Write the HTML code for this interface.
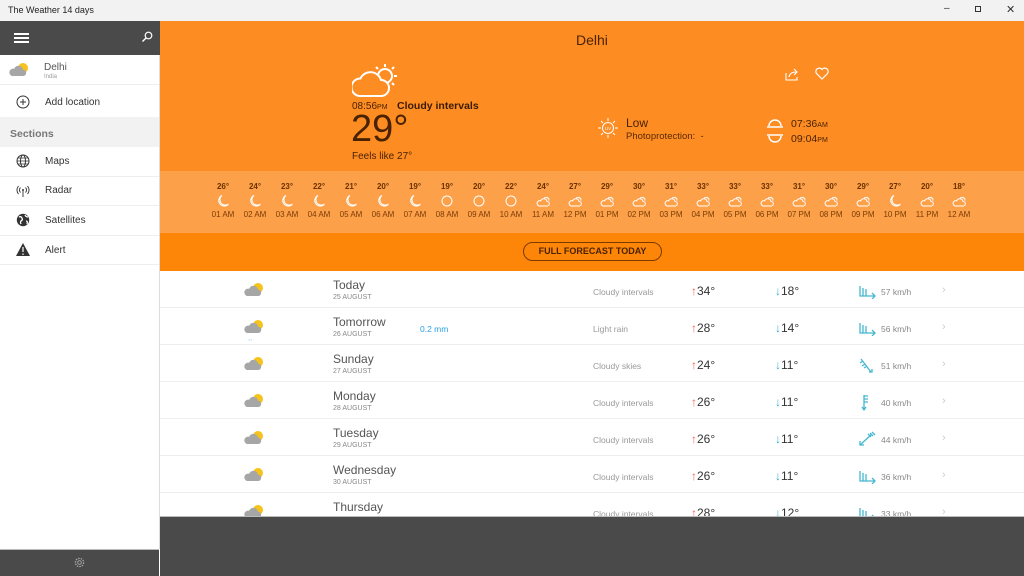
<!DOCTYPE html>
<html><head><meta charset="utf-8">
<style>
*{margin:0;padding:0;box-sizing:border-box}
body{width:1024px;height:576px;overflow:hidden;font-family:"Liberation Sans",sans-serif;background:#fff;position:relative}
.a{position:absolute;white-space:nowrap}
.hr{position:absolute;width:32px;text-align:center;color:#7a3b00}
.hr .t{position:absolute;top:182px;width:32px;font-size:8px;font-weight:bold;color:#6b3200}
.hr .l{position:absolute;top:210px;width:32px;font-size:8px;color:#7a3d05}
.hr svg{position:absolute;top:194px;left:9px}
.row{position:absolute;left:160px;width:864px;height:37px;border-bottom:1px solid #eee}
.row .ic{position:absolute;left:83px;top:11px}
.row .d{position:absolute;left:173px;top:7px;font-size:12px;color:#555}
.row .s{position:absolute;left:173px;top:23px;font-size:7px;color:#888}
.row .c{position:absolute;left:433px;top:16px;font-size:8.5px;color:#999}
.row .h{position:absolute;left:531px;top:13px;font-size:12px;color:#333}
.row .h b{color:#f0625a;font-weight:normal}
.row .lo{position:absolute;left:615px;top:13px;font-size:12px;color:#333}
.row .lo b{color:#3cb0d0;font-weight:normal}
.row .w{position:absolute;left:698px;top:12px}
.row .k{position:absolute;left:721px;top:16px;font-size:8.5px;color:#888}
.row .ch{position:absolute;left:782px;top:13px;font-size:11px;color:#ccc}
.side{font-size:10px;color:#333}
</style></head><body>
<svg width="0" height="0" style="position:absolute">
<symbol id="moon" viewBox="0 0 14 14"><path d="M6 1.5A5.5 5.5 0 1 0 12.5 10 5 5 0 0 1 6 1.5Z" fill="none" stroke="#fff" stroke-width="1"/></symbol>
<symbol id="sun" viewBox="0 0 14 14"><circle cx="7" cy="7" r="5" fill="none" stroke="#fff" stroke-width="1"/></symbol>
<symbol id="cl" viewBox="0 0 14 14"><path d="M8 4.5a2.8 2.8 0 0 1 5 2" fill="none" stroke="#fff"/><path d="M3 12h8a2.3 2.3 0 0 0 0-4.6 3.3 3.3 0 0 0-6.3-.6A2.6 2.6 0 0 0 3 12Z" fill="none" stroke="#fff" stroke-width="1"/></symbol>
<symbol id="pc" viewBox="0 0 22 16"><circle cx="15" cy="6" r="5" fill="#f6c21c"/><path d="M4 14h11a3.2 3.2 0 0 0 0-6.4 4.6 4.6 0 0 0-8.8-.8A3.6 3.6 0 0 0 4 14Z" fill="#a6a6a6"/></symbol>
<symbol id="wE" viewBox="0 0 20 16"><path d="M2 3v10h15M14 10l3 3-3 3M5 5v8M8 6v7" fill="none" stroke="#45b8d0" stroke-width="1.3"/></symbol>
</svg>

<div class="a" style="left:0;top:0;width:1024px;height:21px;background:#f2f2f2"></div>
<div class="a" style="left:8px;top:5px;font-size:9px;color:#222">The Weather 14 days</div>
<div class="a" style="left:944px;top:3px;font-size:10px;color:#333">–</div>
<div class="a" style="left:975px;top:6px;width:6px;height:6px;border:1px solid #333"></div>
<div class="a" style="left:1006px;top:3px;font-size:11px;color:#333">✕</div>

<div class="a" style="left:0;top:21px;width:160px;height:34px;background:#4a4a4a"></div>
<div class="a" style="left:14px;top:33px;width:15px;height:1.5px;background:#fff;box-shadow:0 4px 0 #fff,0 8px 0 #fff"></div>
<svg class="a" style="left:141px;top:31px" width="12" height="12" viewBox="0 0 12 12"><circle cx="7.5" cy="4.5" r="3.3" fill="none" stroke="#fff" stroke-width="1.2"/><path d="M5 7L1.5 10.5" stroke="#fff" stroke-width="1.4"/></svg>
<div class="a" style="left:159px;top:55px;width:1px;height:494px;background:#ddd"></div>
<svg class="a" style="left:8px;top:62px" width="22" height="16"><use href="#pc"/></svg>
<div class="a side" style="left:44px;top:62px;color:#555">Delhi</div>
<div class="a" style="left:44px;top:74px;font-size:6px;color:#999">India</div>
<div class="a" style="left:0;top:84px;width:159px;height:1px;background:#eee"></div>
<svg class="a" style="left:16px;top:95px" width="14" height="14"><circle cx="7" cy="7" r="6" fill="none" stroke="#333"/><path d="M7 4v6M4 7h6" stroke="#333"/></svg>
<div class="a side" style="left:45px;top:97px">Add location</div>
<div class="a" style="left:0;top:117px;width:159px;height:30px;background:#f2f2f2"></div>
<div class="a" style="left:10px;top:128px;font-size:10.5px;color:#777;font-weight:bold">Sections</div>
<svg class="a" style="left:16px;top:154px" width="14" height="14" viewBox="0 0 14 14"><circle cx="7" cy="7" r="6" fill="none" stroke="#333"/><ellipse cx="7" cy="7" rx="2.5" ry="6" fill="none" stroke="#333"/><path d="M1 7h12M2 4h10M2 10h10" stroke="#333" stroke-width=".8"/></svg>
<div class="a side" style="left:45px;top:156px">Maps</div>
<div class="a" style="left:0;top:176px;width:159px;height:1px;background:#eee"></div>
<svg class="a" style="left:15px;top:183px" width="16" height="16" viewBox="0 0 16 16"><circle cx="8" cy="7" r="1" fill="#333"/><path d="M8 8v6M5.5 4.5a3.5 3.5 0 0 0 0 5M10.5 4.5a3.5 3.5 0 0 1 0 5M3.5 3a6 6 0 0 0 0 8M12.5 3a6 6 0 0 1 0 8" fill="none" stroke="#333" stroke-width=".9"/></svg>
<div class="a side" style="left:45px;top:185px">Radar</div>
<div class="a" style="left:0;top:205px;width:159px;height:1px;background:#eee"></div>
<svg class="a" style="left:16px;top:213px" width="14" height="14" viewBox="0 0 14 14"><circle cx="7" cy="7" r="6.2" fill="#333"/><path d="M3 4q2-1 3 1t-1 3q-1 1 0 3M9 2q1 2 3 2M10 8q2 0 1 3" fill="none" stroke="#fff" stroke-width="1.3"/></svg>
<div class="a side" style="left:45px;top:215px">Satellites</div>
<div class="a" style="left:0;top:235px;width:159px;height:1px;background:#eee"></div>
<svg class="a" style="left:16px;top:243px" width="14" height="13"><path d="M7 0L14 13H0Z" fill="#333"/><path d="M7 4v5M7 10.5v1.5" stroke="#fff" stroke-width="1.2"/></svg>
<div class="a side" style="left:45px;top:245px">Alert</div>
<div class="a" style="left:0;top:264px;width:159px;height:1px;background:#eee"></div>
<div class="a" style="left:0;top:549px;width:159px;height:27px;background:#4a4a4a;border-top:1px solid #bbb"></div>
<svg class="a" style="left:74px;top:557px" width="11" height="11" viewBox="0 0 12 12"><circle cx="6" cy="6" r="2" fill="none" stroke="#aaa"/><circle cx="6" cy="6" r="4.5" fill="none" stroke="#aaa" stroke-width="1.4" stroke-dasharray="1.6 1.2"/></svg>

<div class="a" style="left:160px;top:21px;width:864px;height:150px;background:#fd8c23"></div>
<div class="a" style="left:160px;top:171px;width:864px;height:62px;background:#fda04a"></div>
<div class="a" style="left:160px;top:233px;width:864px;height:38px;background:#fd8507"></div>
<div class="a" style="left:576px;top:32px;font-size:14px;color:#4a2200">Delhi</div>
<svg class="a" style="left:352px;top:62px" width="46" height="36" viewBox="0 0 46 36"><g stroke="#fff" stroke-width="2" fill="none"><circle cx="33" cy="14" r="7"/><path d="M33 2v3M42 5l-2 2M45 14h-3M24 5l2 2M42 23l-2-2"/><path d="M7 34h22a8 8 0 0 0 0-16 11 11 0 0 0-20.5-1.5A8.8 8.8 0 0 0 7 34Z" fill="#fd8c23"/></g></svg>
<div class="a" style="left:352px;top:101px;font-size:10px;color:#4a2200">08:56<span style="font-size:7px">PM</span></div>
<div class="a" style="left:397px;top:100px;font-size:10.5px;color:#3a1a00;font-weight:bold">Cloudy intervals</div>
<div class="a" style="left:351px;top:108px;font-size:38px;color:#4a2200">29°</div>
<div class="a" style="left:352px;top:151px;font-size:10px;color:#4a2200">Feels like 27°</div>
<svg class="a" style="left:785px;top:67px" width="14" height="14" viewBox="0 0 14 14"><path d="M1 6v7h11v-3M4 10q1-5 7-5M9 2l3 3-3 3" fill="none" stroke="#fff" stroke-width="1.1"/></svg>
<svg class="a" style="left:815px;top:67px" width="14" height="13" viewBox="0 0 14 13"><path d="M7 12L1.5 6.5A3 3 0 0 1 7 2.5 3 3 0 0 1 12.5 6.5Z" fill="none" stroke="#fff" stroke-width="1.2"/></svg>
<svg class="a" style="left:597px;top:117px" width="22" height="22" viewBox="0 0 22 22"><g stroke="#fff" fill="none"><circle cx="11" cy="11" r="5.5"/><path d="M11 1v3M11 18v3M1 11h3M18 11h3M4 4l2 2M16 16l2 2M18 4l-2 2M4 18l2-2"/></g><text x="11" y="13" font-size="4.5" fill="#fff" text-anchor="middle" font-family="Liberation Sans">UV</text></svg>
<div class="a" style="left:626px;top:116px;font-size:12px;color:#4a2200">Low</div>
<div class="a" style="left:626px;top:131px;font-size:9.5px;color:#5a2a00">Photoprotection:&nbsp; -</div>
<svg class="a" style="left:766px;top:116px" width="18" height="30" viewBox="0 0 18 30"><g stroke="#fff" stroke-width="1.5" fill="none"><path d="M3 10a6 6 0 0 1 12 0M1 11h16M1 19h16M3 20a6 6 0 0 0 12 0"/></g></svg>
<div class="a" style="left:791px;top:118px;font-size:10.5px;color:#4a2200">07:36<span style="font-size:7px">AM</span></div>
<div class="a" style="left:791px;top:133px;font-size:10.5px;color:#4a2200">09:04<span style="font-size:7px">PM</span></div>

<div class="hr" style="left:207px;top:0"><div class="t">26°</div><svg width="14" height="14"><use href="#moon"/></svg><div class="l">01 AM</div></div>
<div class="hr" style="left:239px;top:0"><div class="t">24°</div><svg width="14" height="14"><use href="#moon"/></svg><div class="l">02 AM</div></div>
<div class="hr" style="left:271px;top:0"><div class="t">23°</div><svg width="14" height="14"><use href="#moon"/></svg><div class="l">03 AM</div></div>
<div class="hr" style="left:303px;top:0"><div class="t">22°</div><svg width="14" height="14"><use href="#moon"/></svg><div class="l">04 AM</div></div>
<div class="hr" style="left:335px;top:0"><div class="t">21°</div><svg width="14" height="14"><use href="#moon"/></svg><div class="l">05 AM</div></div>
<div class="hr" style="left:367px;top:0"><div class="t">20°</div><svg width="14" height="14"><use href="#moon"/></svg><div class="l">06 AM</div></div>
<div class="hr" style="left:399px;top:0"><div class="t">19°</div><svg width="14" height="14"><use href="#moon"/></svg><div class="l">07 AM</div></div>
<div class="hr" style="left:431px;top:0"><div class="t">19°</div><svg width="14" height="14"><use href="#sun"/></svg><div class="l">08 AM</div></div>
<div class="hr" style="left:463px;top:0"><div class="t">20°</div><svg width="14" height="14"><use href="#sun"/></svg><div class="l">09 AM</div></div>
<div class="hr" style="left:495px;top:0"><div class="t">22°</div><svg width="14" height="14"><use href="#sun"/></svg><div class="l">10 AM</div></div>
<div class="hr" style="left:527px;top:0"><div class="t">24°</div><svg width="14" height="14"><use href="#cl"/></svg><div class="l">11 AM</div></div>
<div class="hr" style="left:559px;top:0"><div class="t">27°</div><svg width="14" height="14"><use href="#cl"/></svg><div class="l">12 PM</div></div>
<div class="hr" style="left:591px;top:0"><div class="t">29°</div><svg width="14" height="14"><use href="#cl"/></svg><div class="l">01 PM</div></div>
<div class="hr" style="left:623px;top:0"><div class="t">30°</div><svg width="14" height="14"><use href="#cl"/></svg><div class="l">02 PM</div></div>
<div class="hr" style="left:655px;top:0"><div class="t">31°</div><svg width="14" height="14"><use href="#cl"/></svg><div class="l">03 PM</div></div>
<div class="hr" style="left:687px;top:0"><div class="t">33°</div><svg width="14" height="14"><use href="#cl"/></svg><div class="l">04 PM</div></div>
<div class="hr" style="left:719px;top:0"><div class="t">33°</div><svg width="14" height="14"><use href="#cl"/></svg><div class="l">05 PM</div></div>
<div class="hr" style="left:751px;top:0"><div class="t">33°</div><svg width="14" height="14"><use href="#cl"/></svg><div class="l">06 PM</div></div>
<div class="hr" style="left:783px;top:0"><div class="t">31°</div><svg width="14" height="14"><use href="#cl"/></svg><div class="l">07 PM</div></div>
<div class="hr" style="left:815px;top:0"><div class="t">30°</div><svg width="14" height="14"><use href="#cl"/></svg><div class="l">08 PM</div></div>
<div class="hr" style="left:847px;top:0"><div class="t">29°</div><svg width="14" height="14"><use href="#cl"/></svg><div class="l">09 PM</div></div>
<div class="hr" style="left:879px;top:0"><div class="t">27°</div><svg width="14" height="14"><use href="#moon"/></svg><div class="l">10 PM</div></div>
<div class="hr" style="left:911px;top:0"><div class="t">20°</div><svg width="14" height="14"><use href="#cl"/></svg><div class="l">11 PM</div></div>
<div class="hr" style="left:943px;top:0"><div class="t">18°</div><svg width="14" height="14"><use href="#cl"/></svg><div class="l">12 AM</div></div>

<div class="a" style="left:523px;top:242px;width:139px;height:19px;border:1px solid #7a3a00;border-radius:10px;text-align:center;font-size:9px;line-height:17px;font-weight:bold;color:#4a2200">FULL FORECAST TODAY</div>

<div class="row" style="top:271px"><svg class="ic" width="22" height="16"><use href="#pc"/></svg><div class="d">Today</div><div class="s">25 AUGUST</div><div class="c">Cloudy intervals</div><div class="h"><b>↑</b>34°</div><div class="lo"><b>↓</b>18°</div><svg class="w" width="20" height="16"><use href="#wE"/></svg><div class="k">57 km/h</div><div class="ch">›</div></div>
<div class="row" style="top:308px"><svg class="ic" width="22" height="16"><use href="#pc"/></svg><div class="a" style="left:88px;top:27px;font-size:6px;color:#39f">ˏˏ</div><div class="d">Tomorrow</div><div class="s">26 AUGUST</div><div class="a" style="left:260px;top:16px;font-size:8.5px;color:#2aa0e6">0.2 mm</div><div class="c">Light rain</div><div class="h"><b>↑</b>28°</div><div class="lo"><b>↓</b>14°</div><svg class="w" width="20" height="16"><use href="#wE"/></svg><div class="k">56 km/h</div><div class="ch">›</div></div>
<div class="row" style="top:345px"><svg class="ic" width="22" height="16"><use href="#pc"/></svg><div class="d">Sunday</div><div class="s">27 AUGUST</div><div class="c">Cloudy skies</div><div class="h"><b>↑</b>24°</div><div class="lo"><b>↓</b>11°</div><svg class="w" width="20" height="18" viewBox="0 0 20 18"><path d="M3 2l10 13M11 15h3v-3M2 6l3-2M4 9l3-2M6 11l3-2" fill="none" stroke="#45b8d0" stroke-width="1.3"/></svg><div class="k">51 km/h</div><div class="ch">›</div></div>
<div class="row" style="top:382px"><svg class="ic" width="22" height="16"><use href="#pc"/></svg><div class="d">Monday</div><div class="s">28 AUGUST</div><div class="c">Cloudy intervals</div><div class="h"><b>↑</b>26°</div><div class="lo"><b>↓</b>11°</div><svg class="w" width="20" height="18" viewBox="0 0 20 18"><path d="M6 1v15M4 13l2 3 2-3M6 2h4M6 5h4M6 8h4" fill="none" stroke="#45b8d0" stroke-width="1.3"/></svg><div class="k">40 km/h</div><div class="ch">›</div></div>
<div class="row" style="top:419px"><svg class="ic" width="22" height="16"><use href="#pc"/></svg><div class="d">Tuesday</div><div class="s">29 AUGUST</div><div class="c">Cloudy intervals</div><div class="h"><b>↑</b>26°</div><div class="lo"><b>↓</b>11°</div><svg class="w" width="20" height="16" viewBox="0 0 20 16"><path d="M2 14L14 3M2 10v4h4M10 3l3 3M12 2l3 3M14 1l3 3" fill="none" stroke="#45b8d0" stroke-width="1.3"/></svg><div class="k">44 km/h</div><div class="ch">›</div></div>
<div class="row" style="top:456px"><svg class="ic" width="22" height="16"><use href="#pc"/></svg><div class="d">Wednesday</div><div class="s">30 AUGUST</div><div class="c">Cloudy intervals</div><div class="h"><b>↑</b>26°</div><div class="lo"><b>↓</b>11°</div><svg class="w" width="20" height="16"><use href="#wE"/></svg><div class="k">36 km/h</div><div class="ch">›</div></div>
<div class="row" style="top:493px"><svg class="ic" width="22" height="16"><use href="#pc"/></svg><div class="d">Thursday</div><div class="s">31 AUGUST</div><div class="c">Cloudy intervals</div><div class="h"><b>↑</b>28°</div><div class="lo"><b>↓</b>12°</div><svg class="w" width="20" height="16"><use href="#wE"/></svg><div class="k">33 km/h</div><div class="ch">›</div></div>

<div class="a" style="left:160px;top:516px;width:864px;height:60px;background:#4a4a4a;border-top:1px solid #bbb"></div>
</body></html>
